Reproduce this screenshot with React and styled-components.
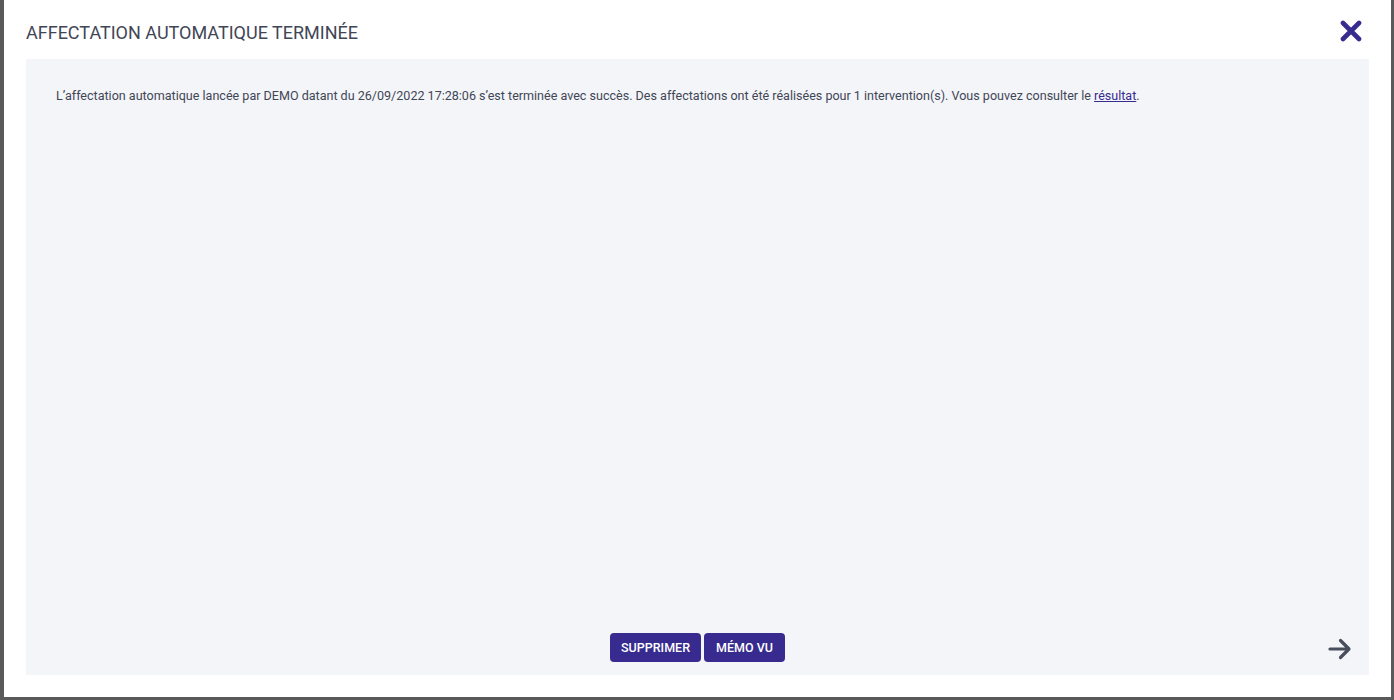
import React from "react";
import styled, { createGlobalStyle } from "styled-components";

const Global = createGlobalStyle`
  html, body { margin: 0; padding: 0; }
  body { font-family: Roboto, "Liberation Sans", sans-serif; background: #5a5a5a; }
`;

const Backdrop = styled.div`
  width: 1394px;
  height: 700px;
  box-sizing: border-box;
  background: #5a5a5a;
  padding: 0 3px 3px 4px;
  display: flex;
`;

const Modal = styled.div`
  flex: 1;
  background: #ffffff;
  display: flex;
  flex-direction: column;
  padding: 0 22px 22px 22px;
`;

const Header = styled.div`
  height: 59px;
  display: flex;
  align-items: center;
  justify-content: space-between;
`;

const Title = styled.h2`
  margin: 6px 0 0 0;
  font-family: Roboto, sans-serif;
  font-weight: 400;
  font-size: 18px;
  color: #3f4656;
  letter-spacing: 0;
`;

const CloseButton = styled.button`
  border: 0;
  background: transparent;
  padding: 0;
  margin: 2px 6px 0 0;
  width: 24px;
  height: 24px;
  display: flex;
  align-items: center;
  justify-content: center;
  cursor: pointer;
`;

const Panel = styled.div`
  flex: 1;
  background: #f4f5f9;
  display: flex;
  flex-direction: column;
  padding: 28px 17px 13px 30px;
`;

const Message = styled.p`
  margin: 0;
  font-size: 12.55px;
  line-height: 18px;
  color: #3f4656;
`;

const ResultLink = styled.a`
  color: #372b8e;
  text-decoration: underline;
`;

const Footer = styled.div`
  margin-top: auto;
  display: grid;
  grid-template-columns: 1fr auto 1fr;
  align-items: center;
  margin-left: -13px;
`;

const ButtonGroup = styled.div`
  grid-column: 2;
  display: flex;
  gap: 3px;
`;

const ActionButton = styled.button`
  height: 29px;
  padding: 0 ${(p) => p.$px || 11}px;
  border: 0;
  border-radius: 4px;
  background: #372b8f;
  color: #ffffff;
  font-family: Roboto, sans-serif;
  font-weight: 500;
  font-size: 12.5px;
  cursor: pointer;
`;

const NextButton = styled.button`
  grid-column: 3;
  justify-self: end;
  border: 0;
  background: transparent;
  padding: 0;
  width: 24px;
  height: 24px;
  display: flex;
  align-items: center;
  justify-content: center;
  margin-top: 2px;
  cursor: pointer;
`;

export default function App() {
  return (
    <>
      <Global />
      <Backdrop>
        <Modal>
          <Header>
            <Title>AFFECTATION AUTOMATIQUE TERMINÉE</Title>
            <CloseButton aria-label="Fermer">
              <svg width="22" height="22" viewBox="0 0 22 22">
                <path
                  d="M3 3 L19 19 M19 3 L3 19"
                  stroke="#372b8f"
                  strokeWidth="4.6"
                  strokeLinecap="round"
                  fill="none"
                />
              </svg>
            </CloseButton>
          </Header>
          <Panel>
            <Message>
              L’affectation automatique lancée par DEMO datant du 26/09/2022 17:28:06 s’est terminée avec succès. Des affectations ont été réalisées pour 1 intervention(s). Vous pouvez consulter le{" "}
              <ResultLink href="#">résultat</ResultLink>.
            </Message>
            <Footer>
              <ButtonGroup>
                <ActionButton $px={11}>SUPPRIMER</ActionButton>
                <ActionButton $px={12}>MÉMO VU</ActionButton>
              </ButtonGroup>
              <NextButton aria-label="Suivant">
                <svg width="24" height="24" viewBox="0 0 24 24">
                  <path
                    d="M2 12 H20 M12.5 3.5 L21 12 L12.5 20.5"
                    stroke="#484e5c"
                    strokeWidth="3.2"
                    strokeLinecap="round"
                    strokeLinejoin="round"
                    fill="none"
                  />
                </svg>
              </NextButton>
            </Footer>
          </Panel>
        </Modal>
      </Backdrop>
    </>
  );
}
